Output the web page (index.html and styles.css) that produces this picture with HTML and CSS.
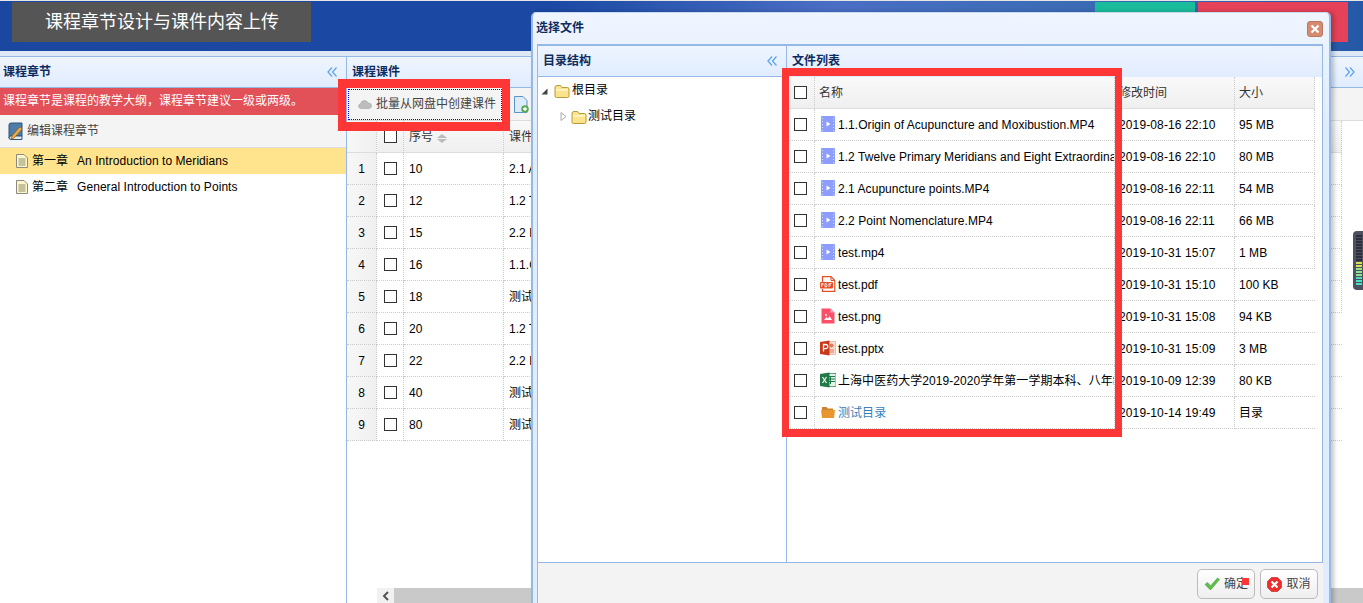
FILE: index.html
```html
<!DOCTYPE html>
<html lang="zh">
<head>
<meta charset="utf-8">
<title>课程章节设计与课件内容上传</title>
<link rel="stylesheet" href="styles.css">
</head>
<body>
<svg class="defs" width="0" height="0" aria-hidden="true">
  <symbol id="i-back" viewBox="0 0 12 12"><path d="M6 1.500 2 6l4 4.500M10.500 1.500 6.500 6l4 4.500" fill="none" stroke="#5ea6ea" stroke-width="1.300"/></symbol>
  <symbol id="i-fwd" viewBox="0 0 12 12"><path d="M1.500 1.500 5.500 6l-4 4.500M6 1.500 10 6l-4 4.500" fill="none" stroke="#5ea6ea" stroke-width="1.300"/></symbol>
  <symbol id="i-doc" viewBox="0 0 12 14"><path d="M.5.500h7.500l3.500 3.500v9.500H.5z" fill="#fdf6c8" stroke="#8a8a80"/><path d="M2.500 5h7M2.500 7h7M2.500 9h7M2.500 11h7" stroke="#8d8d70"/></symbol>
  <symbol id="i-folder" viewBox="0 0 16 14"><path d="M1 3.500Q1 1.500 3 1.500h3.500L8 3.500h5.500q1.500 0 1.500 1.500v7q0 1.500-1.500 1.500h-11Q1 13.500 1 12z" fill="#fbe28c" stroke="#b99a3a"/><path d="M2 5h12v2H2z" fill="#fff3bc"/></symbol>
  <symbol id="i-video" viewBox="0 0 14 16"><rect width="14" height="16" rx="1" fill="#8d9dfd"/><path d="M1 2h1v1H1zM1 5h1v1H1zM1 8h1v1H1zM1 11h1v1H1zM1 14h1v1H1zM12 2h1v1h-1zM12 5h1v1h-1zM12 8h1v1h-1zM12 11h1v1h-1zM12 14h1v1h-1z" fill="#d8deff"/><path d="M5.500 5.500 9.500 8l-4 2.500z" fill="#fff"/></symbol>
</svg>

<header class="topbar">
  <h1 class="page-title">课程章节设计与课件内容上传</h1>
  <div class="top-actions">
    <span class="top-teal"></span>
    <span class="top-red"></span>
  </div>
</header>

<main class="workspace">
  <section class="side">
    <div class="panel-head">
      <span class="panel-title">课程章节</span>
      <svg class="chev"><use href="#i-back"/></svg>
    </div>
    <div class="notice">课程章节是课程的教学大纲，课程章节建议一级或两级。</div>
    <div class="side-tool">
      <svg class="book" viewBox="0 0 16 18">
        <path d="M1 3q0-2 2-2h11v13H3q-2 0-2 2z" fill="#4e7ca6" stroke="#2b567e"/>
        <path d="M1 16q0 1.500 2 1.500h11V14H3q-2 0-2 2z" fill="#dfe8ef" stroke="#2b567e"/>
        <path d="M4 14 12 5l2 2-8 9-3 1z" fill="#eeb044" stroke="#a6661a" stroke-width=".8"/>
      </svg>
      <span>编辑课程章节</span>
    </div>
    <ul class="chapters">
      <li class="chapter chapter-on"><svg class="doc"><use href="#i-doc"/></svg><span>第一章</span><span class="chapter-name">An Introduction to Meridians</span></li>
      <li class="chapter"><svg class="doc"><use href="#i-doc"/></svg><span>第二章</span><span class="chapter-name">General Introduction to Points</span></li>
    </ul>
  </section>

  <section class="content">
    <div class="panel-head">
      <span class="panel-title">课程课件</span>
      <svg class="chev"><use href="#i-fwd"/></svg>
    </div>
    <div class="content-tool">
      <button class="tool-btn" type="button">
        <svg class="cloud" viewBox="0 0 14 10"><path d="M3.500 9.500Q.5 9.500.5 7q0-2 2.200-2.300Q3.200 1.500 6.500 1.500q2.800 0 3.500 2.500 3.500 0 3.500 2.800 0 2.700-3 2.700z" fill="#bdbdbd" stroke="#a2a2a2" stroke-width=".6"/></svg>
        <span>批量从网盘中创建课件</span>
      </button>
      <svg class="doc-add" viewBox="0 0 15 17">
        <path d="M.5.500h8.500l4 4v12H.5z" fill="#dcebf9" stroke="#5b93c9"/>
        <circle cx="11" cy="13" r="3.800" fill="#5aa95a"/><path d="M9 13h4M11 11v4" stroke="#fff" stroke-width="1.300"/>
      </svg>
    </div>
    <table class="grid main-grid">
      <colgroup><col class="c-num"><col class="c-check"><col class="c-order"><col class="c-name"></colgroup>
      <thead>
        <tr><th class="num"></th><th><span class="cb"></span></th><th>序号<span class="sort"><i class="up"></i><i class="down"></i></span></th><th>课件名称</th></tr>
      </thead>
      <tbody>
        <tr><td class="num">1</td><td><span class="cb"></span></td><td>10</td><td class="edge">2.1 Acupuncture points</td></tr>
        <tr><td class="num">2</td><td><span class="cb"></span></td><td>12</td><td class="edge">1.2 Twelve Primary Meridians</td></tr>
        <tr><td class="num">3</td><td><span class="cb"></span></td><td>15</td><td class="edge">2.2 Point Nomenclature</td></tr>
        <tr><td class="num">4</td><td><span class="cb"></span></td><td>16</td><td class="edge">1.1.Origin of Acupuncture</td></tr>
        <tr><td class="num">5</td><td><span class="cb"></span></td><td>18</td><td class="edge">测试课件</td></tr>
        <tr><td class="num">6</td><td><span class="cb"></span></td><td>20</td><td>1.2 Twelve Primary Meridians</td></tr>
        <tr><td class="num">7</td><td><span class="cb"></span></td><td>22</td><td>2.2 Point Nomenclature</td></tr>
        <tr><td class="num">8</td><td><span class="cb"></span></td><td>40</td><td>测试课件</td></tr>
        <tr><td class="num">9</td><td><span class="cb"></span></td><td>80</td><td>测试课件</td></tr>
      </tbody>
    </table>
    <div class="hscroll">
      <span class="hscroll-btn"><svg width="8" height="10" viewBox="0 0 8 10"><path d="M6 1 2 5l4 4" fill="none" stroke="#555" stroke-width="2"/></svg></span>
      <span class="hscroll-thumb"></span>
    </div>
  </section>
</main>

<div class="side-widget">
  <i></i><i></i><i></i><i></i><i></i><i></i><i></i><i></i><i></i>
  <i class="y"></i><i class="y"></i><i class="g"></i><i class="g"></i><i class="g"></i><i class="t"></i><i class="t"></i><i class="t"></i>
</div>

<div class="mark mark-tool"></div>

<div class="modal">
  <div class="modal-head">
    <span class="panel-title">选择文件</span>
    <span class="modal-close"><svg width="10" height="10" viewBox="0 0 10 10"><path d="M1.500 1.500l7 7M8.500 1.500l-7 7" stroke="#fff" stroke-width="2.200"/></svg></span>
  </div>
  <div class="modal-body">
    <aside class="tree-pane">
      <div class="pane-head">
        <span class="panel-title">目录结构</span>
        <svg class="chev"><use href="#i-back"/></svg>
      </div>
      <div class="tree-row tree-root">
        <svg class="arrow" width="7" height="7" viewBox="0 0 7 7"><path d="M6.500.5v6H.5z" fill="#444"/></svg>
        <svg class="folder"><use href="#i-folder"/></svg><span>根目录</span>
      </div>
      <div class="tree-row tree-child">
        <svg class="arrow" width="7" height="9" viewBox="0 0 7 9"><path d="M1 .5 6 4.500 1 8.500z" fill="#fff" stroke="#aaa"/></svg>
        <svg class="folder"><use href="#i-folder"/></svg><span>测试目录</span>
      </div>
    </aside>
    <section class="file-pane">
      <div class="pane-head"><span class="panel-title">文件列表</span></div>
      <table class="grid files">
        <colgroup><col class="f-check"><col class="f-name"><col class="f-time"><col class="f-size"></colgroup>
        <thead>
          <tr><th><span class="cb"></span></th><th>名称</th><th>修改时间</th><th>大小</th></tr>
        </thead>
        <tbody>
          <tr><td><span class="cb"></span></td><td class="name-cell"><div class="fname"><svg class="ficon"><use href="#i-video"/></svg><span>1.1.Origin of Acupuncture and Moxibustion.MP4</span></div></td><td>2019-08-16 22:10</td><td>95 MB</td></tr>
          <tr><td><span class="cb"></span></td><td class="name-cell"><div class="fname"><svg class="ficon"><use href="#i-video"/></svg><span>1.2 Twelve Primary Meridians and Eight Extraordinary Vessels.MP4</span></div></td><td>2019-08-16 22:10</td><td>80 MB</td></tr>
          <tr><td><span class="cb"></span></td><td class="name-cell"><div class="fname"><svg class="ficon"><use href="#i-video"/></svg><span>2.1 Acupuncture points.MP4</span></div></td><td>2019-08-16 22:11</td><td>54 MB</td></tr>
          <tr><td><span class="cb"></span></td><td class="name-cell"><div class="fname"><svg class="ficon"><use href="#i-video"/></svg><span>2.2 Point Nomenclature.MP4</span></div></td><td>2019-08-16 22:11</td><td>66 MB</td></tr>
          <tr><td><span class="cb"></span></td><td class="name-cell"><div class="fname"><svg class="ficon"><use href="#i-video"/></svg><span>test.mp4</span></div></td><td>2019-10-31 15:07</td><td>1 MB</td></tr>
          <tr><td><span class="cb"></span></td><td class="name-cell"><div class="fname"><svg class="ficon" viewBox="0 0 16 16"><path d="M2.500 6V.7h8.500l3.800 3.800v10.800H2.500V13" fill="#fff" stroke="#e2502a" stroke-width="1.200"/><path d="M11 .7v3.800h3.800" fill="none" stroke="#e2502a"/><rect y="6" width="13" height="6.500" rx="1" fill="#e2502a"/><path d="M1.500 11V7.500h1.500v1.500H1.500M5 7.500v3.500h1.300l.7-1.700-.7-1.800zM9 11V7.500h2.500M9 9h2" fill="none" stroke="#fff" stroke-width=".8"/></svg><span>test.pdf</span></div></td><td>2019-10-31 15:10</td><td>100 KB</td></tr>
          <tr><td><span class="cb"></span></td><td class="name-cell"><div class="fname"><svg class="ficon" viewBox="0 0 16 16"><path d="M1.500.5h9l4 4v11h-13z" fill="#fb5068"/><path d="M10.500.5v4h4z" fill="#fda6b2"/><path d="M4 12l2.500-3 1.500 1.500 1.500-2.500 2.500 4z" fill="#fff"/><circle cx="6" cy="7" r=".9" fill="#fff"/></svg><span>test.png</span></div></td><td>2019-10-31 15:08</td><td>94 KB</td></tr>
          <tr><td><span class="cb"></span></td><td class="name-cell"><div class="fname"><svg class="ficon" viewBox="0 0 16 16"><rect x="7" y="1.500" width="8.500" height="13" fill="#f8dcd2" stroke="#e8a792" stroke-width=".7"/><circle cx="11.500" cy="5.500" r="2" fill="#e2775a"/><path d="M9 10h5M9 12h5" stroke="#e2775a"/><path d="M0 2 9.500.5v15L0 14z" fill="#c8391c"/><path d="M3.500 11.500v-7h2.200a2 2 0 0 1 0 4.200H3.500" fill="none" stroke="#fff" stroke-width="1.300"/></svg><span>test.pptx</span></div></td><td>2019-10-31 15:09</td><td>3 MB</td></tr>
          <tr><td><span class="cb"></span></td><td class="name-cell"><div class="fname"><svg class="ficon" viewBox="0 0 16 16"><rect x="7" y="1.500" width="9" height="13" fill="#e4f1ea" stroke="#1f7a48" stroke-width=".7"/><path d="M10.500 4v8M8 4.500h7M8 7h7M8 9.500h7" stroke="#1f7a48"/><path d="M0 2 9.500.5v15L0 14z" fill="#1f7a48"/><path d="M2.500 5l4 6M6.500 5l-4 6" stroke="#fff" stroke-width="1.200"/></svg><span>上海中医药大学2019-2020学年第一学期本科、八年制课程表.xlsx</span></div></td><td>2019-10-09 12:39</td><td>80 KB</td></tr>
          <tr><td><span class="cb"></span></td><td class="name-cell"><div class="fname"><svg class="ficon" viewBox="0 0 16 16"><path d="M2 5V3h4.500l1 1.500H13V6H2z" fill="#c98426"/><path d="M1 6h14l-1 8H2z" fill="#e8962e"/></svg><span class="dir-link">测试目录</span></div></td><td>2019-10-14 19:49</td><td>目录</td></tr>
        </tbody>
      </table>
    </section>
  </div>
  <div class="modal-foot">
    <button class="dlg-btn" type="button">
      <svg width="16" height="14" viewBox="0 0 16 14"><path d="M1 7.500 3.500 5.500 6.500 9 13.500 1l2 1.500L6.500 13z" fill="#5cc04a" stroke="#3a9a36" stroke-width=".6"/></svg>
      <span>确定</span>
    </button>
    <button class="dlg-btn" type="button">
      <svg width="15" height="15" viewBox="0 0 15 15"><path d="M4.500.5h6l4 4v6l-4 4h-6l-4-4v-6z" fill="#ee2d2d" stroke="#c81818" stroke-width=".6"/><path d="M4.500 4.500l6 6M10.500 4.500l-6 6" stroke="#fff" stroke-width="2.200"/></svg>
      <span>取消</span>
    </button>
  </div>
</div>

<div class="mark mark-files"></div>
<div class="mark-dot"></div>
</body>
</html>
```
FILE: styles.css
```css
* { box-sizing: border-box; }
html, body { margin: 0; height: 603px; overflow: hidden; }
body {
  position: relative;
  display: flex;
  flex-direction: column;
  background: #fff;
  color: #000;
  font: 12px/1.2 "Liberation Sans", "Noto Sans CJK SC", sans-serif;
}
.defs { position: absolute; }
i { font-style: normal; }

.topbar {
  flex: none;
  height: 51px;
  padding: 1px 15px 0 12px;
  display: flex;
  justify-content: space-between;
  border-top: 1px solid #e6e6e6;
  background: linear-gradient(90deg, #1a48a1 0, #1a48a3 40%, #4a6ec4 61%, #3c6cb6 78%, #2558a6 100%);
}
.page-title {
  margin: 0;
  width: 299px;
  height: 40px;
  padding-left: 33px;
  background: #555;
  color: #fff;
  font-size: 18px;
  font-weight: 400;
  line-height: 40px;
}
.top-actions { display: flex; gap: 3px; }
.top-teal { width: 100px; height: 12px; background: #1abc9c; }
.top-red { width: 150px; height: 40px; background: #e54158; }

.workspace {
  flex: 1;
  min-height: 0;
  display: flex;
  padding-top: 5px;
  background: #dfe9f6;
}
.side {
  flex: none;
  width: 346px;
  background: #fff;
  border-top: 1px solid #95b8e7;
}
.content {
  flex: 1;
  position: relative;
  background: #fff;
  border-top: 1px solid #95b8e7;
  border-left: 1px solid #95b8e7;
}

.panel-head, .pane-head {
  display: flex;
  align-items: center;
  justify-content: space-between;
  background: linear-gradient(#eff5ff, #e0ecff);
  border-bottom: 1px solid #95b8e7;
}
.panel-head { height: 31px; padding: 0 8px 0 3px; }
.content .panel-head { padding: 0 7px 0 5px; }
.panel-title { font-weight: 700; color: #0e2d5f; }
.chev { width: 12px; height: 12px; }

.notice {
  height: 27px;
  padding-left: 3px;
  background: #e25058;
  color: #fff;
  line-height: 27px;
}
.side-tool {
  height: 33px;
  display: flex;
  align-items: center;
  gap: 3px;
  padding-left: 8px;
  background: #f4f4f4;
  border-bottom: 1px solid #ddd;
  color: #444;
}
.book { width: 16px; height: 18px; }
.chapters { margin: 0; padding: 0; list-style: none; }
.chapter {
  height: 26px;
  display: flex;
  align-items: center;
  padding-left: 16px;
}
.chapter-on { background: #ffe48d; }
.doc { width: 12px; height: 14px; margin-right: 4px; }
.chapter-name { margin-left: 9px; letter-spacing: .06px; }

.content-tool {
  height: 33px;
  display: flex;
  align-items: center;
  padding-left: 1px;
  background: #f4f4f4;
  border-bottom: 1px solid #ddd;
}
.tool-btn {
  height: 31px;
  width: 154px;
  display: flex;
  align-items: center;
  gap: 4px;
  padding: 0 0 0 9px;
  border: 1px dotted #00f;
  background: #f4f4f4;
  color: #444;
  font: inherit;
}
.cloud { width: 14px; height: 10px; }
.doc-add { width: 15px; height: 17px; margin-left: 12px; }

.grid {
  table-layout: fixed;
  border-collapse: separate;
  border-spacing: 0;
  width: 995px;
}
.c-num { width: 30px; }
.c-check { width: 27px; }
.c-order { width: 100px; }
.grid th {
  height: 32px;
  padding: 2px 4px 0;
  background: linear-gradient(#f9f9f9, #efefef);
  border-right: 1px dotted #ccc;
  border-bottom: 1px solid #ddd;
  font-weight: 400;
  text-align: left;
  color: #333;
}
.grid td {
  height: 32px;
  padding: 2px 4px 0;
  border-right: 1px dotted #ccc;
  border-bottom: 1px dotted #ccc;
  white-space: nowrap;
  overflow: hidden;
  letter-spacing: .05px;
}
.main-grid th, .main-grid td { padding-left: 5px; }
.files td:nth-child(3) { letter-spacing: .12px; }
.grid .name-cell { padding-right: 0; }
.grid .num {
  padding: 2px 0 0;
  text-align: center;
  background: linear-gradient(90deg, #f7f7f7, #f0f0f0);
}
.grid tbody tr:nth-child(n+6) td:last-child { border-right: 0; border-bottom: 0; }
.grid tbody tr:nth-child(n+6) td:nth-child(4) { border-bottom: 1px dotted #ccc; }
.cb {
  display: block;
  width: 13px;
  height: 13px;
  margin: -2px 0 0 3px;
  border: 1px solid #333;
  background: #fff;
}
.main-grid .cb { margin-left: 2px; }
.sort { display: inline-flex; flex-direction: column; gap: 1px; margin-left: 4px; vertical-align: middle; }
.up { border: 5px solid transparent; border-top: 0; border-bottom: 4px solid #bbb; }
.down { border: 5px solid transparent; border-bottom: 0; border-top: 4px solid #bbb; }

.hscroll {
  position: absolute;
  left: 30px;
  right: 0;
  bottom: 0;
  height: 15px;
  display: flex;
}
.hscroll-btn {
  flex: none;
  width: 17px;
  display: flex;
  align-items: center;
  justify-content: center;
  background: #f1f1f1;
}
.hscroll-thumb { flex: 1; background: #c9c9c9; }

.side-widget {
  position: absolute;
  left: 1353px;
  top: 231px;
  width: 12px;
  height: 59px;
  padding: 4px 0 0 3px;
  display: flex;
  flex-direction: column;
  gap: 1px;
  background: #4b5160;
  border-radius: 4px 0 0 4px;
}
.side-widget i { flex: none; height: 2px; width: 6px; background: #2c2f38; }
.side-widget .y { background: #d8e04a; }
.side-widget .g { background: #8fe58a; }
.side-widget .t { background: #49e0c0; }

.modal {
  position: absolute;
  left: 531px;
  top: 12px;
  width: 800px;
  height: 600px;
  padding: 0 6px 0 4px;
  display: flex;
  flex-direction: column;
  background: linear-gradient(#eff5ff, #e0ecff 120px);
  border: 2px solid #95b8e7;
  border-top: 1px solid #c8daf4;
  border-radius: 5px 5px 0 0;
  box-shadow: 3px 0 4px rgba(0, 0, 0, .22);
}
.modal-head {
  flex: none;
  height: 31px;
  display: flex;
  align-items: center;
  justify-content: space-between;
  margin-left: -1px;
}
.modal-close {
  width: 16px;
  height: 16px;
  display: flex;
  align-items: center;
  justify-content: center;
  background: #d68b70;
  border: 1px solid #b9795f;
  border-radius: 3px;
}
.modal-body {
  flex: none;
  height: 519px;
  display: flex;
  background: #fff;
  border: 1px solid #95b8e7;
  border-top-width: 2px;
}
.tree-pane {
  flex: none;
  width: 249px;
  border-right: 1px solid #95b8e7;
}
.pane-head { height: 31px; padding: 0 2px 0 5px; }
.tree-pane .pane-head { padding-right: 8px; }
.tree-row { display: flex; align-items: center; }
.tree-root { height: 27px; padding-left: 3px; }
.tree-child { height: 25px; padding-left: 22px; }
.arrow { margin-right: 6px; }
.tree-child .arrow { margin-right: 4px; }
.tree-root .arrow { margin-top: 2px; }
.folder { width: 16px; height: 14px; margin-right: 2px; }
.tree-child .folder { margin-right: 1px; }
.file-pane { flex: 1; min-width: 0; overflow: hidden; }
.file-pane .pane-head { border-bottom: 0; }
.files { width: 528px; }
.f-check { width: 28px; }
.f-name { width: 300px; }
.f-time { width: 120px; }
.f-size { width: 80px; }
.fname { display: flex; align-items: center; }
.fname span { flex: none; }
.ficon { flex: none; width: 16px; height: 16px; margin: -2px 2px 0 1px; }
.dir-link { color: #3a7fb8; }
.modal-foot {
  flex: 1;
  padding: 6px 5px 0 0;
  display: flex;
  justify-content: flex-end;
  align-items: flex-start;
  gap: 5px;
  background: #f3f3f3;
  border-left: 1px solid #95b8e7;
}
.dlg-btn {
  width: 58px;
  height: 30px;
  padding: 0;
  display: flex;
  align-items: center;
  justify-content: center;
  gap: 4px;
  background: linear-gradient(#fff, #eee);
  border: 1px solid #bbb;
  border-radius: 5px;
  color: #444;
  font: inherit;
}

.mark {
  position: absolute;
  border-style: solid;
  border-color: #ff3636;
  pointer-events: none;
}
.mark-tool { left: 338px; top: 79px; width: 172px; height: 52px; border-width: 9px 8px; }
.mark-files { left: 782px; top: 68px; width: 340px; height: 369px; border-width: 8px 7px; }
.mark-dot { position: absolute; left: 1242px; top: 578px; width: 7px; height: 7px; background: #ff3636; }
```
